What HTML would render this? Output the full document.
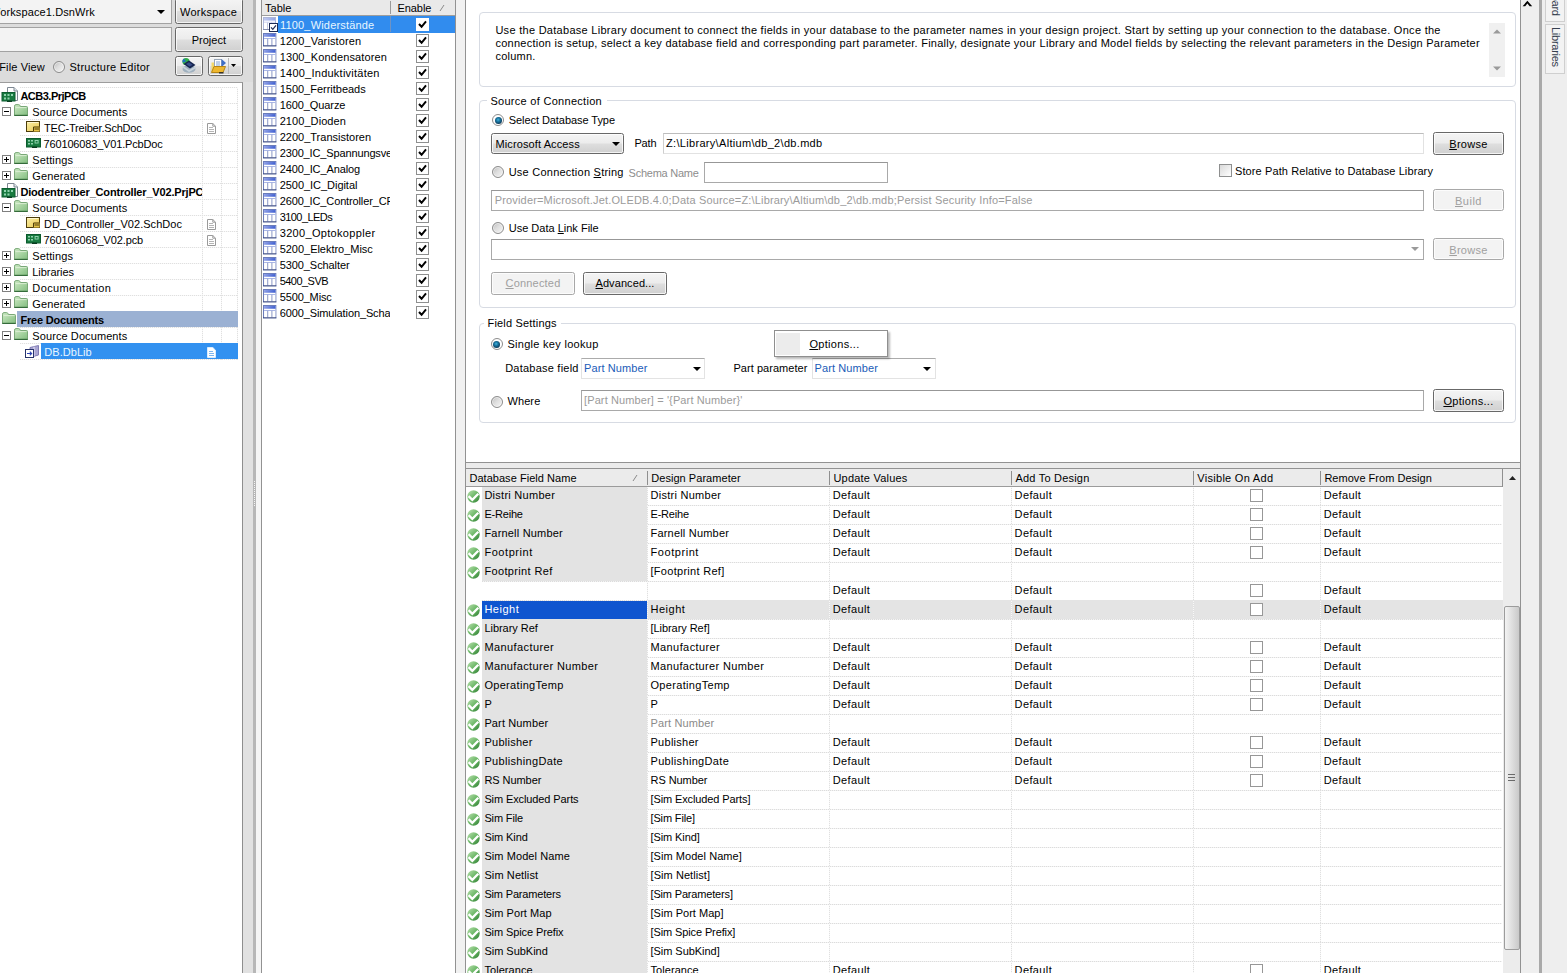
<!DOCTYPE html>
<html><head><meta charset="utf-8"><title>DB.DbLib</title>
<style>
html,body{margin:0;padding:0}html{overflow:hidden;width:1567px;height:973px}
body{width:1567px;height:973px;overflow:hidden;position:relative;background:#fff;font-family:"Liberation Sans",sans-serif;font-size:11px;color:#000;line-height:13px}
div{position:absolute;box-sizing:border-box}
svg.i{position:absolute;overflow:visible}
.t{position:absolute;white-space:pre;line-height:13px;height:13px}
.btn{border:1px solid #686868;border-radius:2.5px;background:linear-gradient(#f4f4f4 0%,#ececec 48%,#dedede 52%,#d0d0d0 100%);box-shadow:inset 0 0 0 1px rgba(255,255,255,.75)}
.btn.dis{border-color:#a8a8a8;background:#f3f3f3}
.inp{border:1px solid #a9a9a9;border-top-color:#979797;background:#fff}
.grp{border:1px solid #d7dbe3;border-radius:4px}
.cb{border:1px solid #8e8f8f;background:#fff}
.rad{border-radius:50%;border:1px solid #8c8c8c;background:linear-gradient(135deg,#bdbdbd 0%,#dedede 45%,#f6f6f6 100%);box-shadow:inset 0 0 0 1px rgba(255,255,255,.55)}
.rad.on{background:#fff}.rad.on::after{content:"";position:absolute;left:1.5px;top:1.5px;width:7px;height:7px;border-radius:50%;background:radial-gradient(circle at 45% 40%,#46b4dc 0%,#1b7aa6 30%,#0d3e5e 70%,#0a2840 100%)}
u{text-decoration:underline;text-underline-offset:1px}

</style></head>
<body>
<svg width="0" height="0" style="position:absolute">
<defs>
<linearGradient id="gF" x1="0" y1="0" x2="1" y2="1"><stop offset="0" stop-color="#cdeac4"/><stop offset="1" stop-color="#82bd7f"/></linearGradient>
<linearGradient id="gOk" x1="0" y1="0" x2="1" y2="1"><stop offset="0" stop-color="#b9e0ae"/><stop offset=".5" stop-color="#6db868"/><stop offset="1" stop-color="#2f7f33"/></linearGradient>
<linearGradient id="gT" x1="0" y1="0" x2="1" y2="0"><stop offset="0" stop-color="#8d9ee6"/><stop offset="1" stop-color="#3f5fd0"/></linearGradient>
<linearGradient id="gY" x1="0" y1="0" x2="1" y2="1"><stop offset="0" stop-color="#fbf0a8"/><stop offset="1" stop-color="#e9c64e"/></linearGradient>
<linearGradient id="gTh" x1="0" y1="0" x2="1" y2="0"><stop offset="0" stop-color="#f0f0f0"/><stop offset=".5" stop-color="#dcdcdc"/><stop offset="1" stop-color="#c4c4c4"/></linearGradient>
<symbol id="folder" viewBox="0 0 14 12"><path d="M.5 11.5V2.2Q.5 .6 2 .6H4.6Q5.6 .6 6 1.6L6.4 2.5H12.6Q13.5 2.5 13.5 3.4V11.5Z" fill="url(#gF)" stroke="#79a877" stroke-width="1"/><path d="M.3 11.4H13.7" stroke="#346b3a" stroke-width="1.2"/><path d="M1.5 3.6H12.5" stroke="#e4f3dd" stroke-width="1" opacity=".8"/></symbol>
<symbol id="prj" viewBox="0 0 17 15"><path d="M6.5 .5H13L16.5 4V13.5H6.5Z" fill="#fff" stroke="#7d8791" stroke-width="1"/><path d="M13 .5V4H16.5" fill="#dfe5ea" stroke="#7d8791" stroke-width="1"/><rect x="1" y="5.5" width="13" height="8.5" fill="#187a40"/><rect x="1" y="5.5" width="13" height="8.5" fill="none" stroke="#0d5c30" stroke-width="1"/><path d="M3 7h2v2H3zM6.5 7h2v2h-2zM10 7h2v2h-2zM3 10.5h2v2H3zM6.5 10.5h2v2h-2z" fill="#8fd3ae"/><rect x="6" y="13.6" width="5" height="1.4" fill="#0a3f22"/></symbol>
<symbol id="sch" viewBox="0 0 14 11"><rect x=".5" y=".5" width="13" height="10" fill="url(#gY)" stroke="#4d3d0c" stroke-width="1"/><path d="M7.5 5.5H13.5V10.5H7.5Z" fill="#e6c44a"/><path d="M7.5 6H13.5M8.5 8H13" stroke="#4d3d0c" stroke-width="1"/><path d="M7.5 6V10" stroke="#4d3d0c" stroke-width="1"/><path d="M1.5 1.5H12.5" stroke="#fff8cf" stroke-width="1"/></symbol>
<symbol id="pcb" viewBox="0 0 15 10"><rect x=".5" y=".5" width="14" height="8.5" fill="#187a40" stroke="#0b5a2d" stroke-width="1"/><path d="M2 2h2v1.6H2zM5 2h2v1.6H5zM2 5h2v1.6H2zM5 5h2v1.6H5zM8.6 2h4v3.6h-4z" fill="#8fd3ae"/><path d="M9.6 3h2v1.6h-2z" fill="#187a40"/><rect x="6" y="8.6" width="5" height="1.4" fill="#093b1f"/></symbol>
<symbol id="doc" viewBox="0 0 9 11"><path d="M.5 .5H5.8L8.5 3.2V10.5H.5Z" fill="#fff" stroke="#9a9a9a" stroke-width="1"/><path d="M5.8 .5V3.2H8.5" fill="none" stroke="#9a9a9a" stroke-width="1"/><path d="M2 4.5H6M2 6.5H7M2 8.5H7" stroke="#b5b5b5" stroke-width="1"/></symbol>
<symbol id="docw" viewBox="0 0 9 11"><path d="M.5 .5H5.8L8.5 3.2V10.5H.5Z" fill="#fff" stroke="#d9ecff" stroke-width="1"/><path d="M2 4.5H6M2 6.5H7M2 8.5H7" stroke="#7fb6ee" stroke-width="1"/></symbol>
<symbol id="dblib" viewBox="0 0 15 13"><path d="M5 2.5L13.5 .5V10L5 12.5Z" fill="#a9a5d2" stroke="#817cb4" stroke-width="1"/><path d="M9 1.6V11.3" stroke="#e6e3f6" stroke-width="1"/><rect x=".5" y="4.5" width="8" height="8" fill="#fff" stroke="#27336b" stroke-width="1"/><path d="M2 8.5H6.5M4.8 6.6L6.7 8.5L4.8 10.4" fill="none" stroke="#2a3fb0" stroke-width="1.1"/></symbol>
<symbol id="tbl" viewBox="0 0 13 13" preserveAspectRatio="none"><rect x=".5" y=".5" width="12" height="12" fill="#fff" stroke="#6b7cba" stroke-width="1"/><rect x="1" y="1" width="11" height="2.6" fill="url(#gT)"/><path d="M1 5.2H12" stroke="#aab6e6" stroke-width="1"/><path d="M4.5 5.5V12M8.5 5.5V12" stroke="#8f9cc9" stroke-width="1"/><path d="M0 12.5H13" stroke="#26356b" stroke-width="1"/></symbol>
<symbol id="ok" viewBox="0 0 13 13"><circle cx="6.5" cy="6.5" r="6.2" fill="url(#gOk)"/><path d="M1.6 6.1L5.3 9.8L11.3 3.7" fill="none" stroke="#fff" stroke-width="2.3" stroke-linejoin="miter"/></symbol>
<symbol id="plus" viewBox="0 0 9 9"><rect x=".5" y=".5" width="8" height="8" fill="#fff" stroke="#7f7f7f" stroke-width="1"/><path d="M2 4.5H7M4.5 2V7" stroke="#000" stroke-width="1"/></symbol>
<symbol id="minus" viewBox="0 0 9 9"><rect x=".5" y=".5" width="8" height="8" fill="#fff" stroke="#7f7f7f" stroke-width="1"/><path d="M2 4.5H7" stroke="#000" stroke-width="1"/></symbol>
<symbol id="chk" viewBox="0 0 13 13"><rect x=".5" y=".5" width="12" height="12" fill="#fff" stroke="#8e8f8f" stroke-width="1"/><path d="M3 6L5.6 8.8L10 3.4" fill="none" stroke="#000" stroke-width="2"/></symbol>
<symbol id="chks" viewBox="0 0 13 13"><rect x="0" y="0" width="13" height="13" fill="#fff"/><path d="M3 6L5.6 8.8L10 3.4" fill="none" stroke="#000" stroke-width="2"/></symbol>

</defs>
</svg>
<div style="left:0px;top:0px;width:253px;height:973px;background:#e1e1e1"></div>
<div style="left:0px;top:0px;width:253px;height:82px;background:#dcdcdc"></div>
<div style="left:253px;top:0px;width:3px;height:973px;background:#b7b7b7"></div>
<div style="left:256px;top:0px;width:5px;height:973px;background:#f5f5f5"></div>
<div style="left:254px;top:481px;width:1px;height:26px;background:repeating-linear-gradient(180deg,#f4f4f4 0 1px,transparent 1px 2px)"></div>
<div style="left:261px;top:0px;width:1px;height:973px;background:#929292"></div>
<div style="left:455px;top:0px;width:1px;height:973px;background:#929292"></div>
<div style="left:456px;top:0px;width:9px;height:973px;background:#f1f1f1"></div>
<div style="left:465px;top:0px;width:1px;height:973px;background:#929292"></div>
<div style="left:1520px;top:0px;width:1px;height:973px;background:#929292"></div>
<div style="left:1521px;top:0px;width:18px;height:973px;background:#efefef"></div>
<div style="left:1539px;top:0px;width:3px;height:973px;background:#a9a9a9"></div>
<div style="left:1542px;top:0px;width:25px;height:973px;background:#eeeeee"></div>
<div style="left:466px;top:462px;width:1054px;height:1px;background:#929292"></div>
<div style="left:466px;top:463px;width:1054px;height:5px;background:#ebebeb"></div>
<div style="left:466px;top:468px;width:1054px;height:1px;background:#929292"></div>
<div style="left:-2px;top:-2px;width:174px;height:26px;background:#f3f3f3;border:1px solid #a2a2a2"></div>
<span class="t" style="top:5.60px;letter-spacing:0.120px;left:-10.15px;">Workspace1.DsnWrk</span>
<svg class="i" style="left:157px;top:10px" width="8" height="4"><path d="M0 0H8L4 4Z" fill="#000"/></svg>
<div style="left:-2px;top:27px;width:174px;height:25px;background:#f3f3f3;border:1px solid #a2a2a2"></div>
<div class="btn" style="left:175px;top:-2px;width:68px;height:26px;"></div>
<span class="t" style="top:6.20px;letter-spacing:0.241px;left:180.00px;">Workspace</span>
<div class="btn" style="left:175px;top:27px;width:68px;height:25px;"></div>
<span class="t" style="top:33.60px;letter-spacing:0.007px;left:191.70px;">Project</span>
<div class="btn" style="left:175px;top:56px;width:28px;height:20px;"></div>
<div class="btn" style="left:208px;top:56px;width:35px;height:20px;"></div>
<div style="left:228px;top:58px;width:1px;height:16px;background:#b9b9b9"></div>
<svg class="i" style="left:231px;top:64px" width="5" height="3"><path d="M0 0H5L2.5 3Z" fill="#000"/></svg>
<svg class="i" style="left:181px;top:57px" width="16" height="17" viewBox="0 0 16 17"><ellipse cx="8" cy="12" rx="6.5" ry="3.8" fill="#9fb0be"/><path d="M1.5 8.5L8 13L14.5 9.5V11.5L8 15L1.5 10.5Z" fill="#c8d3dc"/><circle cx="5" cy="4.5" r="3.6" fill="#2fae4a"/><path d="M1.6 5.5A3.6 3.6 0 0 1 3 1.5L5 4.5Z" fill="#1f6fc0"/><path d="M2.5 7L8 3.5L14.5 8L9 11.5Z" fill="#15244f"/><path d="M5 7L8 5.2L11.5 7.8L8.6 9.6Z" fill="#3a4f8a"/></svg>
<svg class="i" style="left:211px;top:58px" width="16" height="16" viewBox="0 0 16 16"><path d="M.5 4.5H3V14H.5Z" fill="#f3d86a"/><rect x="3.5" y="1.5" width="7" height="9" fill="#fff" stroke="#9aa7b8" stroke-width="1"/><path d="M5 4H9M5 6H9M5 8H9" stroke="#7fa2d6" stroke-width="1"/><path d="M10.5 1L15 5L10.5 9Z" fill="#3f6fc6"/><path d="M.5 14.5L3 8.5H14.5L12 14.5Z" fill="#eeb72e" stroke="#b58515" stroke-width="1"/><path d="M8 14.8H12.5" stroke="#2b2b2b" stroke-width="1.4"/></svg>
<span class="t" style="top:60.60px;letter-spacing:0.120px;left:-0.72px;">File View</span>
<div class="rad" style="left:53px;top:61px;width:12px;height:12px;"></div>
<span class="t" style="top:60.60px;letter-spacing:0.255px;left:69.50px;">Structure Editor</span>
<div style="left:-1px;top:82px;width:244px;height:892px;background:#fff;border:1px solid #8e8e8e;border-top-color:#9c9c9c"></div>
<div style="left:20px;top:87px;width:218px;height:1px;background:repeating-linear-gradient(90deg,#e0e0e0 0 1px,#f8f8f8 1px 2px)"></div>
<div style="left:20px;top:103px;width:218px;height:1px;background:repeating-linear-gradient(90deg,#e0e0e0 0 1px,#f8f8f8 1px 2px)"></div>
<div style="left:20px;top:119px;width:218px;height:1px;background:repeating-linear-gradient(90deg,#e0e0e0 0 1px,#f8f8f8 1px 2px)"></div>
<div style="left:20px;top:135px;width:218px;height:1px;background:repeating-linear-gradient(90deg,#e0e0e0 0 1px,#f8f8f8 1px 2px)"></div>
<div style="left:20px;top:151px;width:218px;height:1px;background:repeating-linear-gradient(90deg,#e0e0e0 0 1px,#f8f8f8 1px 2px)"></div>
<div style="left:20px;top:167px;width:218px;height:1px;background:repeating-linear-gradient(90deg,#e0e0e0 0 1px,#f8f8f8 1px 2px)"></div>
<div style="left:20px;top:183px;width:218px;height:1px;background:repeating-linear-gradient(90deg,#e0e0e0 0 1px,#f8f8f8 1px 2px)"></div>
<div style="left:20px;top:199px;width:218px;height:1px;background:repeating-linear-gradient(90deg,#e0e0e0 0 1px,#f8f8f8 1px 2px)"></div>
<div style="left:20px;top:215px;width:218px;height:1px;background:repeating-linear-gradient(90deg,#e0e0e0 0 1px,#f8f8f8 1px 2px)"></div>
<div style="left:20px;top:231px;width:218px;height:1px;background:repeating-linear-gradient(90deg,#e0e0e0 0 1px,#f8f8f8 1px 2px)"></div>
<div style="left:20px;top:247px;width:218px;height:1px;background:repeating-linear-gradient(90deg,#e0e0e0 0 1px,#f8f8f8 1px 2px)"></div>
<div style="left:20px;top:263px;width:218px;height:1px;background:repeating-linear-gradient(90deg,#e0e0e0 0 1px,#f8f8f8 1px 2px)"></div>
<div style="left:20px;top:279px;width:218px;height:1px;background:repeating-linear-gradient(90deg,#e0e0e0 0 1px,#f8f8f8 1px 2px)"></div>
<div style="left:20px;top:295px;width:218px;height:1px;background:repeating-linear-gradient(90deg,#e0e0e0 0 1px,#f8f8f8 1px 2px)"></div>
<div style="left:20px;top:311px;width:218px;height:1px;background:repeating-linear-gradient(90deg,#e0e0e0 0 1px,#f8f8f8 1px 2px)"></div>
<div style="left:20px;top:327px;width:218px;height:1px;background:repeating-linear-gradient(90deg,#e0e0e0 0 1px,#f8f8f8 1px 2px)"></div>
<div style="left:20px;top:343px;width:218px;height:1px;background:repeating-linear-gradient(90deg,#e0e0e0 0 1px,#f8f8f8 1px 2px)"></div>
<div style="left:20px;top:359px;width:218px;height:1px;background:repeating-linear-gradient(90deg,#e0e0e0 0 1px,#f8f8f8 1px 2px)"></div>
<div style="left:202px;top:88px;width:1px;height:272px;background:repeating-linear-gradient(0deg,#e0e0e0 0 1px,#f8f8f8 1px 2px)"></div>
<div style="left:221px;top:88px;width:1px;height:272px;background:repeating-linear-gradient(0deg,#e0e0e0 0 1px,#f8f8f8 1px 2px)"></div>
<div style="left:237px;top:88px;width:1px;height:272px;background:repeating-linear-gradient(0deg,#e0e0e0 0 1px,#f8f8f8 1px 2px)"></div>
<svg class="i" style="left:1px;top:87px" width="17" height="15" ><use href="#prj"/></svg>
<span class="t" style="top:89.80px;letter-spacing:-0.501px;left:20.40px;font-weight:bold;">ACB3.PrjPCB</span>
<svg class="i" style="left:2px;top:107px" width="9" height="9" ><use href="#minus"/></svg>
<svg class="i" style="left:14px;top:104.4px" width="14" height="12" ><use href="#folder"/></svg>
<span class="t" style="top:105.80px;letter-spacing:0.091px;left:32.30px;">Source Documents</span>
<svg class="i" style="left:26px;top:121.2px" width="14" height="11" ><use href="#sch"/></svg>
<span class="t" style="top:121.80px;letter-spacing:-0.192px;left:44.00px;">TEC-Treiber.SchDoc</span>
<svg class="i" style="left:207px;top:122.5px" width="9" height="11" ><use href="#doc"/></svg>
<svg class="i" style="left:25.5px;top:137.5px" width="15" height="10" ><use href="#pcb"/></svg>
<span class="t" style="top:137.80px;letter-spacing:-0.166px;left:43.60px;">760106083_V01.PcbDoc</span>
<svg class="i" style="left:2px;top:155px" width="9" height="9" ><use href="#plus"/></svg>
<svg class="i" style="left:14px;top:152.4px" width="14" height="12" ><use href="#folder"/></svg>
<span class="t" style="top:153.80px;letter-spacing:0.119px;left:32.30px;">Settings</span>
<svg class="i" style="left:2px;top:171px" width="9" height="9" ><use href="#plus"/></svg>
<svg class="i" style="left:14px;top:168.4px" width="14" height="12" ><use href="#folder"/></svg>
<span class="t" style="top:169.80px;letter-spacing:0.113px;left:32.30px;">Generated</span>
<svg class="i" style="left:1px;top:183px" width="17" height="15" ><use href="#prj"/></svg>
<span class="t" style="top:185.80px;letter-spacing:-0.173px;left:20.40px;font-weight:bold;width:181.4px;overflow:hidden;">Diodentreiber_Controller_V02.PrjPCB</span>
<svg class="i" style="left:2px;top:203px" width="9" height="9" ><use href="#minus"/></svg>
<svg class="i" style="left:14px;top:200.4px" width="14" height="12" ><use href="#folder"/></svg>
<span class="t" style="top:201.80px;letter-spacing:0.091px;left:32.30px;">Source Documents</span>
<svg class="i" style="left:26px;top:217.2px" width="14" height="11" ><use href="#sch"/></svg>
<span class="t" style="top:217.80px;letter-spacing:0.044px;left:44.00px;">DD_Controller_V02.SchDoc</span>
<svg class="i" style="left:207px;top:218.5px" width="9" height="11" ><use href="#doc"/></svg>
<svg class="i" style="left:25.5px;top:233.5px" width="15" height="10" ><use href="#pcb"/></svg>
<span class="t" style="top:233.80px;letter-spacing:-0.126px;left:43.60px;">760106068_V02.pcb</span>
<svg class="i" style="left:207px;top:234.5px" width="9" height="11" ><use href="#doc"/></svg>
<svg class="i" style="left:2px;top:251px" width="9" height="9" ><use href="#plus"/></svg>
<svg class="i" style="left:14px;top:248.4px" width="14" height="12" ><use href="#folder"/></svg>
<span class="t" style="top:249.80px;letter-spacing:0.119px;left:32.30px;">Settings</span>
<svg class="i" style="left:2px;top:267px" width="9" height="9" ><use href="#plus"/></svg>
<svg class="i" style="left:14px;top:264.4px" width="14" height="12" ><use href="#folder"/></svg>
<span class="t" style="top:265.80px;letter-spacing:-0.054px;left:32.30px;">Libraries</span>
<svg class="i" style="left:2px;top:283px" width="9" height="9" ><use href="#plus"/></svg>
<svg class="i" style="left:14px;top:280.4px" width="14" height="12" ><use href="#folder"/></svg>
<span class="t" style="top:281.80px;letter-spacing:0.385px;left:32.30px;">Documentation</span>
<svg class="i" style="left:2px;top:299px" width="9" height="9" ><use href="#plus"/></svg>
<svg class="i" style="left:14px;top:296.4px" width="14" height="12" ><use href="#folder"/></svg>
<span class="t" style="top:297.80px;letter-spacing:0.113px;left:32.30px;">Generated</span>
<div style="left:17px;top:311.2px;width:221px;height:16px;background:#9bb1d3"></div>
<svg class="i" style="left:2px;top:312.4px" width="14" height="12" ><use href="#folder"/></svg>
<span class="t" style="top:313.80px;letter-spacing:-0.186px;left:20.40px;font-weight:bold;">Free Documents</span>
<svg class="i" style="left:2px;top:331px" width="9" height="9" ><use href="#minus"/></svg>
<svg class="i" style="left:14px;top:328.4px" width="14" height="12" ><use href="#folder"/></svg>
<span class="t" style="top:329.80px;letter-spacing:0.091px;left:32.30px;">Source Documents</span>
<div style="left:41px;top:343.1px;width:197px;height:16px;background:#3291f0"></div>
<svg class="i" style="left:25px;top:345px" width="15" height="13" ><use href="#dblib"/></svg>
<span class="t" style="top:345.80px;letter-spacing:0.040px;left:44.30px;color:#e9f6ff;">DB.DbLib</span>
<svg class="i" style="left:207px;top:346.5px" width="9" height="11" ><use href="#docw"/></svg>
<div style="left:262px;top:0px;width:193px;height:16px;background:#e9e9e9;border-bottom:1px solid #9d9d9d"></div>
<div style="left:390px;top:1px;width:1px;height:13px;background:#9a9a9a"></div>
<span class="t" style="top:1.60px;letter-spacing:0.041px;left:265.00px;">Table</span>
<span class="t" style="top:1.60px;letter-spacing:-0.044px;left:397.40px;">Enable</span>
<svg class="i" style="left:439px;top:4px" width="6" height="8"><path d="M1 7L5 1" stroke="#8a8a8a" stroke-width="1"/></svg>
<div style="left:278px;top:16px;width:177px;height:16.5px;background:#318cee"></div>
<div style="left:390px;top:16px;width:1px;height:16px;background:#6f93c4"></div>
<svg class="i" style="left:263px;top:17px" width="13" height="13" opacity=".55"><use href="#tbl"/></svg>
<svg class="i" style="left:269px;top:23px" width="9" height="9" viewBox="0 0 9 9"><rect x=".5" y=".5" width="8" height="8" fill="#fff" stroke="#1c2b55"/><path d="M2 4.4L3.8 6.3L7 2.3" fill="none" stroke="#1c2b55" stroke-width="1.2"/></svg>
<span class="t" style="top:18.50px;letter-spacing:0.179px;left:280.00px;color:#e6f6ff;width:110px;overflow:hidden;">1100_Widerstände</span>
<svg class="i" style="left:416px;top:18px" width="13" height="13" ><use href="#chks"/></svg>
<svg class="i" style="left:263.2px;top:33px" width="13.6" height="13.6" preserveAspectRatio="none"><use href="#tbl"/></svg>
<span class="t" style="top:34.50px;letter-spacing:0.100px;left:279.70px;width:110.3px;overflow:hidden;">1200_Varistoren</span>
<svg class="i" style="left:416px;top:34px" width="13" height="13" ><use href="#chk"/></svg>
<svg class="i" style="left:263.2px;top:49px" width="13.6" height="13.6" preserveAspectRatio="none"><use href="#tbl"/></svg>
<span class="t" style="top:50.50px;letter-spacing:0.110px;left:279.70px;width:110.3px;overflow:hidden;">1300_Kondensatoren</span>
<svg class="i" style="left:416px;top:50px" width="13" height="13" ><use href="#chk"/></svg>
<svg class="i" style="left:263.2px;top:65px" width="13.6" height="13.6" preserveAspectRatio="none"><use href="#tbl"/></svg>
<span class="t" style="top:66.50px;letter-spacing:0.241px;left:279.70px;width:110.3px;overflow:hidden;">1400_Induktivitäten</span>
<svg class="i" style="left:416px;top:66px" width="13" height="13" ><use href="#chk"/></svg>
<svg class="i" style="left:263.2px;top:81px" width="13.6" height="13.6" preserveAspectRatio="none"><use href="#tbl"/></svg>
<span class="t" style="top:82.50px;letter-spacing:-0.015px;left:279.70px;width:110.3px;overflow:hidden;">1500_Ferritbeads</span>
<svg class="i" style="left:416px;top:82px" width="13" height="13" ><use href="#chk"/></svg>
<svg class="i" style="left:263.2px;top:97px" width="13.6" height="13.6" preserveAspectRatio="none"><use href="#tbl"/></svg>
<span class="t" style="top:98.50px;letter-spacing:-0.088px;left:279.70px;width:110.3px;overflow:hidden;">1600_Quarze</span>
<svg class="i" style="left:416px;top:98px" width="13" height="13" ><use href="#chk"/></svg>
<svg class="i" style="left:263.2px;top:113px" width="13.6" height="13.6" preserveAspectRatio="none"><use href="#tbl"/></svg>
<span class="t" style="top:114.50px;letter-spacing:0.068px;left:279.70px;width:110.3px;overflow:hidden;">2100_Dioden</span>
<svg class="i" style="left:416px;top:114px" width="13" height="13" ><use href="#chk"/></svg>
<svg class="i" style="left:263.2px;top:129px" width="13.6" height="13.6" preserveAspectRatio="none"><use href="#tbl"/></svg>
<span class="t" style="top:130.50px;letter-spacing:0.004px;left:279.70px;width:110.3px;overflow:hidden;">2200_Transistoren</span>
<svg class="i" style="left:416px;top:130px" width="13" height="13" ><use href="#chk"/></svg>
<svg class="i" style="left:263.2px;top:145px" width="13.6" height="13.6" preserveAspectRatio="none"><use href="#tbl"/></svg>
<span class="t" style="top:146.50px;letter-spacing:-0.137px;left:279.70px;width:110.3px;overflow:hidden;">2300_IC_Spannungsversorgung</span>
<svg class="i" style="left:416px;top:146px" width="13" height="13" ><use href="#chk"/></svg>
<svg class="i" style="left:263.2px;top:161px" width="13.6" height="13.6" preserveAspectRatio="none"><use href="#tbl"/></svg>
<span class="t" style="top:162.50px;letter-spacing:-0.119px;left:279.70px;width:110.3px;overflow:hidden;">2400_IC_Analog</span>
<svg class="i" style="left:416px;top:162px" width="13" height="13" ><use href="#chk"/></svg>
<svg class="i" style="left:263.2px;top:177px" width="13.6" height="13.6" preserveAspectRatio="none"><use href="#tbl"/></svg>
<span class="t" style="top:178.50px;letter-spacing:-0.039px;left:279.70px;width:110.3px;overflow:hidden;">2500_IC_Digital</span>
<svg class="i" style="left:416px;top:178px" width="13" height="13" ><use href="#chk"/></svg>
<svg class="i" style="left:263.2px;top:193px" width="13.6" height="13.6" preserveAspectRatio="none"><use href="#tbl"/></svg>
<span class="t" style="top:194.50px;letter-spacing:-0.133px;left:279.70px;width:110.3px;overflow:hidden;">2600_IC_Controller_CPLD</span>
<svg class="i" style="left:416px;top:194px" width="13" height="13" ><use href="#chk"/></svg>
<svg class="i" style="left:263.2px;top:209px" width="13.6" height="13.6" preserveAspectRatio="none"><use href="#tbl"/></svg>
<span class="t" style="top:210.50px;letter-spacing:-0.567px;left:279.70px;width:110.3px;overflow:hidden;">3100_LEDs</span>
<svg class="i" style="left:416px;top:210px" width="13" height="13" ><use href="#chk"/></svg>
<svg class="i" style="left:263.2px;top:225px" width="13.6" height="13.6" preserveAspectRatio="none"><use href="#tbl"/></svg>
<span class="t" style="top:226.50px;letter-spacing:0.324px;left:279.70px;width:110.3px;overflow:hidden;">3200_Optokoppler</span>
<svg class="i" style="left:416px;top:226px" width="13" height="13" ><use href="#chk"/></svg>
<svg class="i" style="left:263.2px;top:241px" width="13.6" height="13.6" preserveAspectRatio="none"><use href="#tbl"/></svg>
<span class="t" style="top:242.50px;letter-spacing:-0.027px;left:279.70px;width:110.3px;overflow:hidden;">5200_Elektro_Misc</span>
<svg class="i" style="left:416px;top:242px" width="13" height="13" ><use href="#chk"/></svg>
<svg class="i" style="left:263.2px;top:257px" width="13.6" height="13.6" preserveAspectRatio="none"><use href="#tbl"/></svg>
<span class="t" style="top:258.50px;letter-spacing:-0.081px;left:279.70px;width:110.3px;overflow:hidden;">5300_Schalter</span>
<svg class="i" style="left:416px;top:258px" width="13" height="13" ><use href="#chk"/></svg>
<svg class="i" style="left:263.2px;top:273px" width="13.6" height="13.6" preserveAspectRatio="none"><use href="#tbl"/></svg>
<span class="t" style="top:274.50px;letter-spacing:-0.539px;left:279.70px;width:110.3px;overflow:hidden;">5400_SVB</span>
<svg class="i" style="left:416px;top:274px" width="13" height="13" ><use href="#chk"/></svg>
<svg class="i" style="left:263.2px;top:289px" width="13.6" height="13.6" preserveAspectRatio="none"><use href="#tbl"/></svg>
<span class="t" style="top:290.50px;letter-spacing:-0.134px;left:279.70px;width:110.3px;overflow:hidden;">5500_Misc</span>
<svg class="i" style="left:416px;top:290px" width="13" height="13" ><use href="#chk"/></svg>
<svg class="i" style="left:263.2px;top:305px" width="13.6" height="13.6" preserveAspectRatio="none"><use href="#tbl"/></svg>
<span class="t" style="top:306.50px;letter-spacing:-0.117px;left:279.70px;width:110.3px;overflow:hidden;">6000_Simulation_Schaltung</span>
<svg class="i" style="left:416px;top:306px" width="13" height="13" ><use href="#chk"/></svg>
<div class="grp" style="left:479px;top:12px;width:1037px;height:75px;"></div>
<span class="t" style="top:24.20px;letter-spacing:0.284px;left:495.40px;">Use the Database Library document to connect the fields in your database to the parameter names in your design project. Start by setting up your connection to the database. Once the</span>
<span class="t" style="top:37.20px;letter-spacing:0.253px;left:495.40px;">connection is setup, select a key database field and corresponding part parameter. Finally, designate your Library and Model fields by selecting the relevant parameters in the Design Parameter</span>
<span class="t" style="top:50.20px;letter-spacing:0.253px;left:495.40px;">column.</span>
<div style="left:1489px;top:23px;width:16px;height:54px;background:#f0f0f0"></div>
<svg class="i" style="left:1493px;top:29px" width="8" height="5"><path d="M0 4.5L4 .5L8 4.5Z" fill="#9a9a9a"/></svg>
<svg class="i" style="left:1493px;top:66px" width="8" height="5"><path d="M0 .5L4 4.5L8 .5Z" fill="#9a9a9a"/></svg>
<div class="grp" style="left:479px;top:100px;width:1037px;height:208px;"></div>
<div style="left:487px;top:95px;width:120px;height:12px;background:#fff"></div>
<span class="t" style="top:94.80px;letter-spacing:0.290px;left:490.40px;">Source of Connection</span>
<div class="rad on" style="left:492px;top:114px;width:12px;height:12px;"></div>
<span class="t" style="top:113.60px;letter-spacing:-0.056px;left:508.70px;">Select Database Type</span>
<div class="btn" style="left:491px;top:133.3px;width:133px;height:20.7px;"></div>
<span class="t" style="top:137.90px;letter-spacing:0.111px;left:495.50px;">Microsoft Access</span>
<svg class="i" style="left:612px;top:142px" width="8" height="4"><path d="M0 0H8L4 4Z" fill="#000"/></svg>
<span class="t" style="top:137.20px;letter-spacing:-0.135px;left:634.40px;">Path</span>
<div style="left:663px;top:133px;width:761px;height:21px;border:1px solid #e2e2e2;border-top-color:#bdbdbd;border-left-color:#cfcfcf;background:#fff"></div>
<span class="t" style="top:137.20px;letter-spacing:0.315px;left:666.00px;">Z:\Library\Altium\db_2\db.mdb</span>
<div class="btn" style="left:1433px;top:132px;width:71px;height:22.6px;"></div>
<span class="t" style="top:137.80px;letter-spacing:0.302px;left:1449.25px;"><u>B</u>rowse</span>
<div class="rad" style="left:492px;top:166px;width:12px;height:12px;"></div>
<span class="t" style="top:165.90px;letter-spacing:0.235px;left:508.70px;">Use Connection <u>S</u>tring</span>
<span class="t" style="top:166.90px;letter-spacing:-0.251px;left:628.60px;color:#8d8d8d;">Schema Name</span>
<div class="inp" style="left:704px;top:162.4px;width:184px;height:20.6px;"></div>
<div class="cb" style="left:1219px;top:164px;width:13px;height:13px;background:linear-gradient(135deg,#d9d9d9,#fff)"></div>
<span class="t" style="top:164.90px;letter-spacing:0.107px;left:1235.00px;">Store Path Relative to Database Library</span>
<div class="inp" style="left:491px;top:190px;width:933px;height:21px;"></div>
<span class="t" style="top:194.20px;letter-spacing:0.170px;left:494.70px;color:#9b9b9b;">Provider=Microsoft.Jet.OLEDB.4.0;Data Source=Z:\Library\Altium\db_2\db.mdb;Persist Security Info=False</span>
<div class="btn dis" style="left:1433px;top:189.2px;width:71px;height:22.3px;"></div>
<span class="t" style="top:194.60px;letter-spacing:0.506px;left:1455.00px;color:#a0a0a0;"><u>B</u>uild</span>
<div class="rad" style="left:492px;top:222.3px;width:12px;height:12px;"></div>
<span class="t" style="top:222.10px;letter-spacing:0.007px;left:508.70px;">Use Data <u>L</u>ink File</span>
<div class="inp" style="left:491px;top:239px;width:933px;height:21px;"></div>
<svg class="i" style="left:1411px;top:247px" width="8" height="4"><path d="M0 0H8L4 4Z" fill="#9a9a9a"/></svg>
<div class="btn dis" style="left:1433px;top:238.2px;width:71px;height:22.3px;"></div>
<span class="t" style="top:243.60px;letter-spacing:0.302px;left:1449.25px;color:#a0a0a0;"><u>B</u>rowse</span>
<div class="btn dis" style="left:491px;top:271.8px;width:84px;height:22.8px;"></div>
<span class="t" style="top:277.20px;letter-spacing:0.198px;left:505.50px;color:#a0a0a0;"><u>C</u>onnected</span>
<div class="btn" style="left:583px;top:271.8px;width:84px;height:22.8px;"></div>
<span class="t" style="top:277.20px;letter-spacing:0.082px;left:595.50px;"><u>A</u>dvanced...</span>
<div class="grp" style="left:479px;top:322.5px;width:1037px;height:100px;"></div>
<div style="left:484px;top:317px;width:77px;height:12px;background:#fff"></div>
<span class="t" style="top:317.20px;letter-spacing:0.182px;left:487.50px;">Field Settings</span>
<div class="rad on" style="left:490.7px;top:338.2px;width:12px;height:12px;"></div>
<span class="t" style="top:337.90px;letter-spacing:0.292px;left:507.40px;">Single key lookup</span>
<span class="t" style="top:362.20px;letter-spacing:0.227px;left:505.20px;">Database field</span>
<div style="left:581px;top:358px;width:124px;height:21px;border:1px solid #e3e3e3;border-top-color:#ababab;background:#fff"></div>
<span class="t" style="top:362.20px;letter-spacing:0.113px;left:584.00px;color:#1b5cb8;">Part Number</span>
<svg class="i" style="left:693px;top:366.5px" width="8" height="4"><path d="M0 0H8L4 4Z" fill="#000"/></svg>
<span class="t" style="top:362.20px;letter-spacing:0.052px;left:733.40px;">Part parameter</span>
<div style="left:811.5px;top:358px;width:124px;height:21px;border:1px solid #e3e3e3;border-top-color:#ababab;background:#fff"></div>
<span class="t" style="top:362.20px;letter-spacing:0.113px;left:814.50px;color:#1b5cb8;">Part Number</span>
<svg class="i" style="left:923px;top:366.5px" width="8" height="4"><path d="M0 0H8L4 4Z" fill="#000"/></svg>
<div class="rad" style="left:490.7px;top:395.5px;width:12px;height:12px;"></div>
<span class="t" style="top:395.40px;letter-spacing:0.119px;left:507.40px;">Where</span>
<div class="inp" style="left:581px;top:389.8px;width:843px;height:21px;"></div>
<span class="t" style="top:394.20px;letter-spacing:0.119px;left:584.00px;color:#9b9b9b;">[Part Number] = &#x27;{Part Number}&#x27;</span>
<div class="btn" style="left:1433px;top:389.2px;width:71px;height:22.8px;"></div>
<span class="t" style="top:394.80px;letter-spacing:0.312px;left:1443.40px;"><u>O</u>ptions...</span>
<div style="left:774px;top:329.8px;width:113.5px;height:27.7px;background:#fff;border:1px solid #8f8f8f;box-shadow:2px 2px 2px rgba(0,0,0,.28)"></div>
<div style="left:776px;top:333px;width:24px;height:22px;background:#ececec"></div>
<span class="t" style="top:337.90px;letter-spacing:0.312px;left:809.40px;"><u>O</u>ptions...</span>
<div style="left:466px;top:469px;width:1037px;height:17px;background:#ebebeb"></div>
<div style="left:466px;top:486px;width:1037px;height:1px;background:#9b9b9b"></div>
<div style="left:647px;top:471px;width:1px;height:14px;background:#8f8f8f"></div>
<div style="left:829px;top:471px;width:1px;height:14px;background:#8f8f8f"></div>
<div style="left:1011px;top:471px;width:1px;height:14px;background:#8f8f8f"></div>
<div style="left:1193px;top:471px;width:1px;height:14px;background:#8f8f8f"></div>
<div style="left:1320px;top:471px;width:1px;height:14px;background:#8f8f8f"></div>
<div style="left:1502px;top:469px;width:1px;height:18px;background:#8f8f8f"></div>
<span class="t" style="top:471.80px;letter-spacing:0.043px;left:469.40px;">Database Field Name</span>
<svg class="i" style="left:632px;top:474px" width="6" height="8"><path d="M1 7L5 1" stroke="#8a8a8a" stroke-width="1"/></svg>
<span class="t" style="top:471.80px;letter-spacing:0.040px;left:651.30px;">Design Parameter</span>
<span class="t" style="top:471.80px;letter-spacing:0.219px;left:833.40px;">Update Values</span>
<span class="t" style="top:471.80px;letter-spacing:0.203px;left:1015.50px;">Add To Design</span>
<span class="t" style="top:471.80px;letter-spacing:0.288px;left:1197.30px;">Visible On Add</span>
<span class="t" style="top:471.80px;letter-spacing:0.029px;left:1324.40px;">Remove From Design</span>
<div style="left:1503px;top:469px;width:17px;height:504px;background:#ececec"></div>
<svg class="i" style="left:1509px;top:476px" width="7" height="4"><path d="M0 4L3.5 0L7 4Z" fill="#222"/></svg>
<div style="left:1504px;top:606px;width:15.5px;height:344px;background:linear-gradient(90deg,#f3f3f3,#dedede 50%,#c9c9c9);border:1px solid #9c9c9c;border-radius:2px"></div>
<div style="left:1508px;top:774px;width:7px;height:1px;background:#6a6a6a"></div>
<div style="left:1508px;top:777px;width:7px;height:1px;background:#6a6a6a"></div>
<div style="left:1508px;top:780px;width:7px;height:1px;background:#6a6a6a"></div>
<div style="left:482px;top:487px;width:165px;height:19px;background:#e3e3e3"></div>
<svg class="i" style="left:467px;top:489.7px" width="13" height="13" ><use href="#ok"/></svg>
<span class="t" style="top:488.60px;letter-spacing:0.267px;left:484.40px;">Distri Number</span>
<span class="t" style="top:488.60px;letter-spacing:0.267px;left:650.50px;">Distri Number</span>
<div style="left:482px;top:505px;width:1020px;height:1px;background:repeating-linear-gradient(90deg,#dcdcdc 0 1px,#f3f3f3 1px 2px)"></div>
<div style="left:647px;top:487px;width:1px;height:18px;background:repeating-linear-gradient(0deg,#e0e0e0 0 1px,#f8f8f8 1px 2px)"></div>
<div style="left:829px;top:487px;width:1px;height:18px;background:repeating-linear-gradient(0deg,#e0e0e0 0 1px,#f8f8f8 1px 2px)"></div>
<div style="left:1011px;top:487px;width:1px;height:18px;background:repeating-linear-gradient(0deg,#e0e0e0 0 1px,#f8f8f8 1px 2px)"></div>
<div style="left:1193px;top:487px;width:1px;height:18px;background:repeating-linear-gradient(0deg,#e0e0e0 0 1px,#f8f8f8 1px 2px)"></div>
<div style="left:1320px;top:487px;width:1px;height:18px;background:repeating-linear-gradient(0deg,#e0e0e0 0 1px,#f8f8f8 1px 2px)"></div>
<span class="t" style="top:488.60px;letter-spacing:0.377px;left:832.80px;">Default</span>
<span class="t" style="top:488.60px;letter-spacing:0.377px;left:1014.60px;">Default</span>
<span class="t" style="top:488.60px;letter-spacing:0.377px;left:1323.70px;">Default</span>
<div style="left:1250px;top:489px;width:13px;height:13px;border:1px solid #979797;background:#fff"></div>
<div style="left:482px;top:505px;width:165px;height:20px;background:#e3e3e3"></div>
<svg class="i" style="left:467px;top:508.7px" width="13" height="13" ><use href="#ok"/></svg>
<span class="t" style="top:507.60px;letter-spacing:-0.193px;left:484.40px;">E-Reihe</span>
<span class="t" style="top:507.60px;letter-spacing:-0.193px;left:650.50px;">E-Reihe</span>
<div style="left:482px;top:524px;width:1020px;height:1px;background:repeating-linear-gradient(90deg,#dcdcdc 0 1px,#f3f3f3 1px 2px)"></div>
<div style="left:647px;top:506px;width:1px;height:18px;background:repeating-linear-gradient(0deg,#e0e0e0 0 1px,#f8f8f8 1px 2px)"></div>
<div style="left:829px;top:506px;width:1px;height:18px;background:repeating-linear-gradient(0deg,#e0e0e0 0 1px,#f8f8f8 1px 2px)"></div>
<div style="left:1011px;top:506px;width:1px;height:18px;background:repeating-linear-gradient(0deg,#e0e0e0 0 1px,#f8f8f8 1px 2px)"></div>
<div style="left:1193px;top:506px;width:1px;height:18px;background:repeating-linear-gradient(0deg,#e0e0e0 0 1px,#f8f8f8 1px 2px)"></div>
<div style="left:1320px;top:506px;width:1px;height:18px;background:repeating-linear-gradient(0deg,#e0e0e0 0 1px,#f8f8f8 1px 2px)"></div>
<span class="t" style="top:507.60px;letter-spacing:0.377px;left:832.80px;">Default</span>
<span class="t" style="top:507.60px;letter-spacing:0.377px;left:1014.60px;">Default</span>
<span class="t" style="top:507.60px;letter-spacing:0.377px;left:1323.70px;">Default</span>
<div style="left:1250px;top:508px;width:13px;height:13px;border:1px solid #979797;background:#fff"></div>
<div style="left:482px;top:524px;width:165px;height:20px;background:#e3e3e3"></div>
<svg class="i" style="left:467px;top:527.7px" width="13" height="13" ><use href="#ok"/></svg>
<span class="t" style="top:526.60px;letter-spacing:0.199px;left:484.40px;">Farnell Number</span>
<span class="t" style="top:526.60px;letter-spacing:0.199px;left:650.50px;">Farnell Number</span>
<div style="left:482px;top:543px;width:1020px;height:1px;background:repeating-linear-gradient(90deg,#dcdcdc 0 1px,#f3f3f3 1px 2px)"></div>
<div style="left:647px;top:525px;width:1px;height:18px;background:repeating-linear-gradient(0deg,#e0e0e0 0 1px,#f8f8f8 1px 2px)"></div>
<div style="left:829px;top:525px;width:1px;height:18px;background:repeating-linear-gradient(0deg,#e0e0e0 0 1px,#f8f8f8 1px 2px)"></div>
<div style="left:1011px;top:525px;width:1px;height:18px;background:repeating-linear-gradient(0deg,#e0e0e0 0 1px,#f8f8f8 1px 2px)"></div>
<div style="left:1193px;top:525px;width:1px;height:18px;background:repeating-linear-gradient(0deg,#e0e0e0 0 1px,#f8f8f8 1px 2px)"></div>
<div style="left:1320px;top:525px;width:1px;height:18px;background:repeating-linear-gradient(0deg,#e0e0e0 0 1px,#f8f8f8 1px 2px)"></div>
<span class="t" style="top:526.60px;letter-spacing:0.377px;left:832.80px;">Default</span>
<span class="t" style="top:526.60px;letter-spacing:0.377px;left:1014.60px;">Default</span>
<span class="t" style="top:526.60px;letter-spacing:0.377px;left:1323.70px;">Default</span>
<div style="left:1250px;top:527px;width:13px;height:13px;border:1px solid #979797;background:#fff"></div>
<div style="left:482px;top:543px;width:165px;height:20px;background:#e3e3e3"></div>
<svg class="i" style="left:467px;top:546.7px" width="13" height="13" ><use href="#ok"/></svg>
<span class="t" style="top:545.60px;letter-spacing:0.564px;left:484.40px;">Footprint</span>
<span class="t" style="top:545.60px;letter-spacing:0.564px;left:650.50px;">Footprint</span>
<div style="left:482px;top:562px;width:1020px;height:1px;background:repeating-linear-gradient(90deg,#dcdcdc 0 1px,#f3f3f3 1px 2px)"></div>
<div style="left:647px;top:544px;width:1px;height:18px;background:repeating-linear-gradient(0deg,#e0e0e0 0 1px,#f8f8f8 1px 2px)"></div>
<div style="left:829px;top:544px;width:1px;height:18px;background:repeating-linear-gradient(0deg,#e0e0e0 0 1px,#f8f8f8 1px 2px)"></div>
<div style="left:1011px;top:544px;width:1px;height:18px;background:repeating-linear-gradient(0deg,#e0e0e0 0 1px,#f8f8f8 1px 2px)"></div>
<div style="left:1193px;top:544px;width:1px;height:18px;background:repeating-linear-gradient(0deg,#e0e0e0 0 1px,#f8f8f8 1px 2px)"></div>
<div style="left:1320px;top:544px;width:1px;height:18px;background:repeating-linear-gradient(0deg,#e0e0e0 0 1px,#f8f8f8 1px 2px)"></div>
<span class="t" style="top:545.60px;letter-spacing:0.377px;left:832.80px;">Default</span>
<span class="t" style="top:545.60px;letter-spacing:0.377px;left:1014.60px;">Default</span>
<span class="t" style="top:545.60px;letter-spacing:0.377px;left:1323.70px;">Default</span>
<div style="left:1250px;top:546px;width:13px;height:13px;border:1px solid #979797;background:#fff"></div>
<div style="left:482px;top:562px;width:165px;height:20px;background:#e3e3e3"></div>
<svg class="i" style="left:467px;top:565.7px" width="13" height="13" ><use href="#ok"/></svg>
<span class="t" style="top:564.60px;letter-spacing:0.354px;left:484.40px;">Footprint Ref</span>
<span class="t" style="top:564.60px;letter-spacing:0.286px;left:650.50px;">[Footprint Ref]</span>
<div style="left:482px;top:581px;width:1020px;height:1px;background:repeating-linear-gradient(90deg,#dcdcdc 0 1px,#f3f3f3 1px 2px)"></div>
<div style="left:647px;top:563px;width:1px;height:18px;background:repeating-linear-gradient(0deg,#e0e0e0 0 1px,#f8f8f8 1px 2px)"></div>
<div style="left:829px;top:563px;width:1px;height:18px;background:repeating-linear-gradient(0deg,#e0e0e0 0 1px,#f8f8f8 1px 2px)"></div>
<div style="left:1011px;top:563px;width:1px;height:18px;background:repeating-linear-gradient(0deg,#e0e0e0 0 1px,#f8f8f8 1px 2px)"></div>
<div style="left:1193px;top:563px;width:1px;height:18px;background:repeating-linear-gradient(0deg,#e0e0e0 0 1px,#f8f8f8 1px 2px)"></div>
<div style="left:1320px;top:563px;width:1px;height:18px;background:repeating-linear-gradient(0deg,#e0e0e0 0 1px,#f8f8f8 1px 2px)"></div>
<div style="left:482px;top:600px;width:1020px;height:1px;background:repeating-linear-gradient(90deg,#dcdcdc 0 1px,#f3f3f3 1px 2px)"></div>
<div style="left:647px;top:582px;width:1px;height:18px;background:repeating-linear-gradient(0deg,#e0e0e0 0 1px,#f8f8f8 1px 2px)"></div>
<div style="left:829px;top:582px;width:1px;height:18px;background:repeating-linear-gradient(0deg,#e0e0e0 0 1px,#f8f8f8 1px 2px)"></div>
<div style="left:1011px;top:582px;width:1px;height:18px;background:repeating-linear-gradient(0deg,#e0e0e0 0 1px,#f8f8f8 1px 2px)"></div>
<div style="left:1193px;top:582px;width:1px;height:18px;background:repeating-linear-gradient(0deg,#e0e0e0 0 1px,#f8f8f8 1px 2px)"></div>
<div style="left:1320px;top:582px;width:1px;height:18px;background:repeating-linear-gradient(0deg,#e0e0e0 0 1px,#f8f8f8 1px 2px)"></div>
<span class="t" style="top:583.60px;letter-spacing:0.377px;left:832.80px;">Default</span>
<span class="t" style="top:583.60px;letter-spacing:0.377px;left:1014.60px;">Default</span>
<span class="t" style="top:583.60px;letter-spacing:0.377px;left:1323.70px;">Default</span>
<div style="left:1250px;top:584px;width:13px;height:13px;border:1px solid #979797;background:#fff"></div>
<div style="left:648px;top:600px;width:855px;height:20px;background:#e4e4e4"></div>
<div style="left:482px;top:601px;width:165px;height:18px;background:#0f55cf"></div>
<svg class="i" style="left:467px;top:603.7px" width="13" height="13" ><use href="#ok"/></svg>
<span class="t" style="top:602.60px;letter-spacing:0.501px;left:484.40px;color:#fff;">Height</span>
<span class="t" style="top:602.60px;letter-spacing:0.501px;left:650.50px;">Height</span>
<div style="left:482px;top:619px;width:1020px;height:1px;background:repeating-linear-gradient(90deg,#dcdcdc 0 1px,#f3f3f3 1px 2px)"></div>
<div style="left:647px;top:601px;width:1px;height:18px;background:repeating-linear-gradient(0deg,#e0e0e0 0 1px,#f8f8f8 1px 2px)"></div>
<div style="left:829px;top:601px;width:1px;height:18px;background:repeating-linear-gradient(0deg,#e0e0e0 0 1px,#f8f8f8 1px 2px)"></div>
<div style="left:1011px;top:601px;width:1px;height:18px;background:repeating-linear-gradient(0deg,#e0e0e0 0 1px,#f8f8f8 1px 2px)"></div>
<div style="left:1193px;top:601px;width:1px;height:18px;background:repeating-linear-gradient(0deg,#e0e0e0 0 1px,#f8f8f8 1px 2px)"></div>
<div style="left:1320px;top:601px;width:1px;height:18px;background:repeating-linear-gradient(0deg,#e0e0e0 0 1px,#f8f8f8 1px 2px)"></div>
<span class="t" style="top:602.60px;letter-spacing:0.377px;left:832.80px;">Default</span>
<span class="t" style="top:602.60px;letter-spacing:0.377px;left:1014.60px;">Default</span>
<span class="t" style="top:602.60px;letter-spacing:0.377px;left:1323.70px;">Default</span>
<div style="left:1250px;top:603px;width:13px;height:13px;border:1px solid #979797;background:#fff"></div>
<div style="left:482px;top:619px;width:165px;height:20px;background:#e3e3e3"></div>
<svg class="i" style="left:467px;top:622.7px" width="13" height="13" ><use href="#ok"/></svg>
<span class="t" style="top:621.60px;letter-spacing:-0.036px;left:484.40px;">Library Ref</span>
<span class="t" style="top:621.60px;letter-spacing:-0.056px;left:650.50px;">[Library Ref]</span>
<div style="left:482px;top:638px;width:1020px;height:1px;background:repeating-linear-gradient(90deg,#dcdcdc 0 1px,#f3f3f3 1px 2px)"></div>
<div style="left:647px;top:620px;width:1px;height:18px;background:repeating-linear-gradient(0deg,#e0e0e0 0 1px,#f8f8f8 1px 2px)"></div>
<div style="left:829px;top:620px;width:1px;height:18px;background:repeating-linear-gradient(0deg,#e0e0e0 0 1px,#f8f8f8 1px 2px)"></div>
<div style="left:1011px;top:620px;width:1px;height:18px;background:repeating-linear-gradient(0deg,#e0e0e0 0 1px,#f8f8f8 1px 2px)"></div>
<div style="left:1193px;top:620px;width:1px;height:18px;background:repeating-linear-gradient(0deg,#e0e0e0 0 1px,#f8f8f8 1px 2px)"></div>
<div style="left:1320px;top:620px;width:1px;height:18px;background:repeating-linear-gradient(0deg,#e0e0e0 0 1px,#f8f8f8 1px 2px)"></div>
<div style="left:482px;top:638px;width:165px;height:20px;background:#e3e3e3"></div>
<svg class="i" style="left:467px;top:641.7px" width="13" height="13" ><use href="#ok"/></svg>
<span class="t" style="top:640.60px;letter-spacing:0.407px;left:484.40px;">Manufacturer</span>
<span class="t" style="top:640.60px;letter-spacing:0.407px;left:650.50px;">Manufacturer</span>
<div style="left:482px;top:657px;width:1020px;height:1px;background:repeating-linear-gradient(90deg,#dcdcdc 0 1px,#f3f3f3 1px 2px)"></div>
<div style="left:647px;top:639px;width:1px;height:18px;background:repeating-linear-gradient(0deg,#e0e0e0 0 1px,#f8f8f8 1px 2px)"></div>
<div style="left:829px;top:639px;width:1px;height:18px;background:repeating-linear-gradient(0deg,#e0e0e0 0 1px,#f8f8f8 1px 2px)"></div>
<div style="left:1011px;top:639px;width:1px;height:18px;background:repeating-linear-gradient(0deg,#e0e0e0 0 1px,#f8f8f8 1px 2px)"></div>
<div style="left:1193px;top:639px;width:1px;height:18px;background:repeating-linear-gradient(0deg,#e0e0e0 0 1px,#f8f8f8 1px 2px)"></div>
<div style="left:1320px;top:639px;width:1px;height:18px;background:repeating-linear-gradient(0deg,#e0e0e0 0 1px,#f8f8f8 1px 2px)"></div>
<span class="t" style="top:640.60px;letter-spacing:0.377px;left:832.80px;">Default</span>
<span class="t" style="top:640.60px;letter-spacing:0.377px;left:1014.60px;">Default</span>
<span class="t" style="top:640.60px;letter-spacing:0.377px;left:1323.70px;">Default</span>
<div style="left:1250px;top:641px;width:13px;height:13px;border:1px solid #979797;background:#fff"></div>
<div style="left:482px;top:657px;width:165px;height:20px;background:#e3e3e3"></div>
<svg class="i" style="left:467px;top:660.7px" width="13" height="13" ><use href="#ok"/></svg>
<span class="t" style="top:659.60px;letter-spacing:0.358px;left:484.40px;">Manufacturer Number</span>
<span class="t" style="top:659.60px;letter-spacing:0.358px;left:650.50px;">Manufacturer Number</span>
<div style="left:482px;top:676px;width:1020px;height:1px;background:repeating-linear-gradient(90deg,#dcdcdc 0 1px,#f3f3f3 1px 2px)"></div>
<div style="left:647px;top:658px;width:1px;height:18px;background:repeating-linear-gradient(0deg,#e0e0e0 0 1px,#f8f8f8 1px 2px)"></div>
<div style="left:829px;top:658px;width:1px;height:18px;background:repeating-linear-gradient(0deg,#e0e0e0 0 1px,#f8f8f8 1px 2px)"></div>
<div style="left:1011px;top:658px;width:1px;height:18px;background:repeating-linear-gradient(0deg,#e0e0e0 0 1px,#f8f8f8 1px 2px)"></div>
<div style="left:1193px;top:658px;width:1px;height:18px;background:repeating-linear-gradient(0deg,#e0e0e0 0 1px,#f8f8f8 1px 2px)"></div>
<div style="left:1320px;top:658px;width:1px;height:18px;background:repeating-linear-gradient(0deg,#e0e0e0 0 1px,#f8f8f8 1px 2px)"></div>
<span class="t" style="top:659.60px;letter-spacing:0.377px;left:832.80px;">Default</span>
<span class="t" style="top:659.60px;letter-spacing:0.377px;left:1014.60px;">Default</span>
<span class="t" style="top:659.60px;letter-spacing:0.377px;left:1323.70px;">Default</span>
<div style="left:1250px;top:660px;width:13px;height:13px;border:1px solid #979797;background:#fff"></div>
<div style="left:482px;top:676px;width:165px;height:20px;background:#e3e3e3"></div>
<svg class="i" style="left:467px;top:679.7px" width="13" height="13" ><use href="#ok"/></svg>
<span class="t" style="top:678.60px;letter-spacing:0.314px;left:484.40px;">OperatingTemp</span>
<span class="t" style="top:678.60px;letter-spacing:0.314px;left:650.50px;">OperatingTemp</span>
<div style="left:482px;top:695px;width:1020px;height:1px;background:repeating-linear-gradient(90deg,#dcdcdc 0 1px,#f3f3f3 1px 2px)"></div>
<div style="left:647px;top:677px;width:1px;height:18px;background:repeating-linear-gradient(0deg,#e0e0e0 0 1px,#f8f8f8 1px 2px)"></div>
<div style="left:829px;top:677px;width:1px;height:18px;background:repeating-linear-gradient(0deg,#e0e0e0 0 1px,#f8f8f8 1px 2px)"></div>
<div style="left:1011px;top:677px;width:1px;height:18px;background:repeating-linear-gradient(0deg,#e0e0e0 0 1px,#f8f8f8 1px 2px)"></div>
<div style="left:1193px;top:677px;width:1px;height:18px;background:repeating-linear-gradient(0deg,#e0e0e0 0 1px,#f8f8f8 1px 2px)"></div>
<div style="left:1320px;top:677px;width:1px;height:18px;background:repeating-linear-gradient(0deg,#e0e0e0 0 1px,#f8f8f8 1px 2px)"></div>
<span class="t" style="top:678.60px;letter-spacing:0.377px;left:832.80px;">Default</span>
<span class="t" style="top:678.60px;letter-spacing:0.377px;left:1014.60px;">Default</span>
<span class="t" style="top:678.60px;letter-spacing:0.377px;left:1323.70px;">Default</span>
<div style="left:1250px;top:679px;width:13px;height:13px;border:1px solid #979797;background:#fff"></div>
<div style="left:482px;top:695px;width:165px;height:20px;background:#e3e3e3"></div>
<svg class="i" style="left:467px;top:698.7px" width="13" height="13" ><use href="#ok"/></svg>
<span class="t" style="top:697.60px;letter-spacing:-1.144px;left:484.40px;">P</span>
<span class="t" style="top:697.60px;letter-spacing:-1.144px;left:650.50px;">P</span>
<div style="left:482px;top:714px;width:1020px;height:1px;background:repeating-linear-gradient(90deg,#dcdcdc 0 1px,#f3f3f3 1px 2px)"></div>
<div style="left:647px;top:696px;width:1px;height:18px;background:repeating-linear-gradient(0deg,#e0e0e0 0 1px,#f8f8f8 1px 2px)"></div>
<div style="left:829px;top:696px;width:1px;height:18px;background:repeating-linear-gradient(0deg,#e0e0e0 0 1px,#f8f8f8 1px 2px)"></div>
<div style="left:1011px;top:696px;width:1px;height:18px;background:repeating-linear-gradient(0deg,#e0e0e0 0 1px,#f8f8f8 1px 2px)"></div>
<div style="left:1193px;top:696px;width:1px;height:18px;background:repeating-linear-gradient(0deg,#e0e0e0 0 1px,#f8f8f8 1px 2px)"></div>
<div style="left:1320px;top:696px;width:1px;height:18px;background:repeating-linear-gradient(0deg,#e0e0e0 0 1px,#f8f8f8 1px 2px)"></div>
<span class="t" style="top:697.60px;letter-spacing:0.377px;left:832.80px;">Default</span>
<span class="t" style="top:697.60px;letter-spacing:0.377px;left:1014.60px;">Default</span>
<span class="t" style="top:697.60px;letter-spacing:0.377px;left:1323.70px;">Default</span>
<div style="left:1250px;top:698px;width:13px;height:13px;border:1px solid #979797;background:#fff"></div>
<div style="left:482px;top:714px;width:165px;height:20px;background:#e3e3e3"></div>
<svg class="i" style="left:467px;top:717.7px" width="13" height="13" ><use href="#ok"/></svg>
<span class="t" style="top:716.60px;letter-spacing:0.131px;left:484.40px;">Part Number</span>
<span class="t" style="top:716.60px;letter-spacing:0.131px;left:650.50px;color:#8a8a8a;">Part Number</span>
<div style="left:482px;top:733px;width:1020px;height:1px;background:repeating-linear-gradient(90deg,#dcdcdc 0 1px,#f3f3f3 1px 2px)"></div>
<div style="left:647px;top:715px;width:1px;height:18px;background:repeating-linear-gradient(0deg,#e0e0e0 0 1px,#f8f8f8 1px 2px)"></div>
<div style="left:829px;top:715px;width:1px;height:18px;background:repeating-linear-gradient(0deg,#e0e0e0 0 1px,#f8f8f8 1px 2px)"></div>
<div style="left:1011px;top:715px;width:1px;height:18px;background:repeating-linear-gradient(0deg,#e0e0e0 0 1px,#f8f8f8 1px 2px)"></div>
<div style="left:1193px;top:715px;width:1px;height:18px;background:repeating-linear-gradient(0deg,#e0e0e0 0 1px,#f8f8f8 1px 2px)"></div>
<div style="left:1320px;top:715px;width:1px;height:18px;background:repeating-linear-gradient(0deg,#e0e0e0 0 1px,#f8f8f8 1px 2px)"></div>
<div style="left:482px;top:733px;width:165px;height:20px;background:#e3e3e3"></div>
<svg class="i" style="left:467px;top:736.7px" width="13" height="13" ><use href="#ok"/></svg>
<span class="t" style="top:735.60px;letter-spacing:0.271px;left:484.40px;">Publisher</span>
<span class="t" style="top:735.60px;letter-spacing:0.271px;left:650.50px;">Publisher</span>
<div style="left:482px;top:752px;width:1020px;height:1px;background:repeating-linear-gradient(90deg,#dcdcdc 0 1px,#f3f3f3 1px 2px)"></div>
<div style="left:647px;top:734px;width:1px;height:18px;background:repeating-linear-gradient(0deg,#e0e0e0 0 1px,#f8f8f8 1px 2px)"></div>
<div style="left:829px;top:734px;width:1px;height:18px;background:repeating-linear-gradient(0deg,#e0e0e0 0 1px,#f8f8f8 1px 2px)"></div>
<div style="left:1011px;top:734px;width:1px;height:18px;background:repeating-linear-gradient(0deg,#e0e0e0 0 1px,#f8f8f8 1px 2px)"></div>
<div style="left:1193px;top:734px;width:1px;height:18px;background:repeating-linear-gradient(0deg,#e0e0e0 0 1px,#f8f8f8 1px 2px)"></div>
<div style="left:1320px;top:734px;width:1px;height:18px;background:repeating-linear-gradient(0deg,#e0e0e0 0 1px,#f8f8f8 1px 2px)"></div>
<span class="t" style="top:735.60px;letter-spacing:0.377px;left:832.80px;">Default</span>
<span class="t" style="top:735.60px;letter-spacing:0.377px;left:1014.60px;">Default</span>
<span class="t" style="top:735.60px;letter-spacing:0.377px;left:1323.70px;">Default</span>
<div style="left:1250px;top:736px;width:13px;height:13px;border:1px solid #979797;background:#fff"></div>
<div style="left:482px;top:752px;width:165px;height:20px;background:#e3e3e3"></div>
<svg class="i" style="left:467px;top:755.7px" width="13" height="13" ><use href="#ok"/></svg>
<span class="t" style="top:754.60px;letter-spacing:0.329px;left:484.40px;">PublishingDate</span>
<span class="t" style="top:754.60px;letter-spacing:0.329px;left:650.50px;">PublishingDate</span>
<div style="left:482px;top:771px;width:1020px;height:1px;background:repeating-linear-gradient(90deg,#dcdcdc 0 1px,#f3f3f3 1px 2px)"></div>
<div style="left:647px;top:753px;width:1px;height:18px;background:repeating-linear-gradient(0deg,#e0e0e0 0 1px,#f8f8f8 1px 2px)"></div>
<div style="left:829px;top:753px;width:1px;height:18px;background:repeating-linear-gradient(0deg,#e0e0e0 0 1px,#f8f8f8 1px 2px)"></div>
<div style="left:1011px;top:753px;width:1px;height:18px;background:repeating-linear-gradient(0deg,#e0e0e0 0 1px,#f8f8f8 1px 2px)"></div>
<div style="left:1193px;top:753px;width:1px;height:18px;background:repeating-linear-gradient(0deg,#e0e0e0 0 1px,#f8f8f8 1px 2px)"></div>
<div style="left:1320px;top:753px;width:1px;height:18px;background:repeating-linear-gradient(0deg,#e0e0e0 0 1px,#f8f8f8 1px 2px)"></div>
<span class="t" style="top:754.60px;letter-spacing:0.377px;left:832.80px;">Default</span>
<span class="t" style="top:754.60px;letter-spacing:0.377px;left:1014.60px;">Default</span>
<span class="t" style="top:754.60px;letter-spacing:0.377px;left:1323.70px;">Default</span>
<div style="left:1250px;top:755px;width:13px;height:13px;border:1px solid #979797;background:#fff"></div>
<div style="left:482px;top:771px;width:165px;height:20px;background:#e3e3e3"></div>
<svg class="i" style="left:467px;top:774.7px" width="13" height="13" ><use href="#ok"/></svg>
<span class="t" style="top:773.60px;letter-spacing:-0.063px;left:484.40px;">RS Number</span>
<span class="t" style="top:773.60px;letter-spacing:-0.063px;left:650.50px;">RS Number</span>
<div style="left:482px;top:790px;width:1020px;height:1px;background:repeating-linear-gradient(90deg,#dcdcdc 0 1px,#f3f3f3 1px 2px)"></div>
<div style="left:647px;top:772px;width:1px;height:18px;background:repeating-linear-gradient(0deg,#e0e0e0 0 1px,#f8f8f8 1px 2px)"></div>
<div style="left:829px;top:772px;width:1px;height:18px;background:repeating-linear-gradient(0deg,#e0e0e0 0 1px,#f8f8f8 1px 2px)"></div>
<div style="left:1011px;top:772px;width:1px;height:18px;background:repeating-linear-gradient(0deg,#e0e0e0 0 1px,#f8f8f8 1px 2px)"></div>
<div style="left:1193px;top:772px;width:1px;height:18px;background:repeating-linear-gradient(0deg,#e0e0e0 0 1px,#f8f8f8 1px 2px)"></div>
<div style="left:1320px;top:772px;width:1px;height:18px;background:repeating-linear-gradient(0deg,#e0e0e0 0 1px,#f8f8f8 1px 2px)"></div>
<span class="t" style="top:773.60px;letter-spacing:0.377px;left:832.80px;">Default</span>
<span class="t" style="top:773.60px;letter-spacing:0.377px;left:1014.60px;">Default</span>
<span class="t" style="top:773.60px;letter-spacing:0.377px;left:1323.70px;">Default</span>
<div style="left:1250px;top:774px;width:13px;height:13px;border:1px solid #979797;background:#fff"></div>
<div style="left:482px;top:790px;width:165px;height:20px;background:#e3e3e3"></div>
<svg class="i" style="left:467px;top:793.7px" width="13" height="13" ><use href="#ok"/></svg>
<span class="t" style="top:792.60px;letter-spacing:-0.105px;left:484.40px;">Sim Excluded Parts</span>
<span class="t" style="top:792.60px;letter-spacing:-0.110px;left:650.50px;">[Sim Excluded Parts]</span>
<div style="left:482px;top:809px;width:1020px;height:1px;background:repeating-linear-gradient(90deg,#dcdcdc 0 1px,#f3f3f3 1px 2px)"></div>
<div style="left:647px;top:791px;width:1px;height:18px;background:repeating-linear-gradient(0deg,#e0e0e0 0 1px,#f8f8f8 1px 2px)"></div>
<div style="left:829px;top:791px;width:1px;height:18px;background:repeating-linear-gradient(0deg,#e0e0e0 0 1px,#f8f8f8 1px 2px)"></div>
<div style="left:1011px;top:791px;width:1px;height:18px;background:repeating-linear-gradient(0deg,#e0e0e0 0 1px,#f8f8f8 1px 2px)"></div>
<div style="left:1193px;top:791px;width:1px;height:18px;background:repeating-linear-gradient(0deg,#e0e0e0 0 1px,#f8f8f8 1px 2px)"></div>
<div style="left:1320px;top:791px;width:1px;height:18px;background:repeating-linear-gradient(0deg,#e0e0e0 0 1px,#f8f8f8 1px 2px)"></div>
<div style="left:482px;top:809px;width:165px;height:20px;background:#e3e3e3"></div>
<svg class="i" style="left:467px;top:812.7px" width="13" height="13" ><use href="#ok"/></svg>
<span class="t" style="top:811.60px;letter-spacing:-0.142px;left:484.40px;">Sim File</span>
<span class="t" style="top:811.60px;letter-spacing:-0.144px;left:650.50px;">[Sim File]</span>
<div style="left:482px;top:828px;width:1020px;height:1px;background:repeating-linear-gradient(90deg,#dcdcdc 0 1px,#f3f3f3 1px 2px)"></div>
<div style="left:647px;top:810px;width:1px;height:18px;background:repeating-linear-gradient(0deg,#e0e0e0 0 1px,#f8f8f8 1px 2px)"></div>
<div style="left:829px;top:810px;width:1px;height:18px;background:repeating-linear-gradient(0deg,#e0e0e0 0 1px,#f8f8f8 1px 2px)"></div>
<div style="left:1011px;top:810px;width:1px;height:18px;background:repeating-linear-gradient(0deg,#e0e0e0 0 1px,#f8f8f8 1px 2px)"></div>
<div style="left:1193px;top:810px;width:1px;height:18px;background:repeating-linear-gradient(0deg,#e0e0e0 0 1px,#f8f8f8 1px 2px)"></div>
<div style="left:1320px;top:810px;width:1px;height:18px;background:repeating-linear-gradient(0deg,#e0e0e0 0 1px,#f8f8f8 1px 2px)"></div>
<div style="left:482px;top:828px;width:165px;height:20px;background:#e3e3e3"></div>
<svg class="i" style="left:467px;top:831.7px" width="13" height="13" ><use href="#ok"/></svg>
<span class="t" style="top:830.60px;letter-spacing:-0.079px;left:484.40px;">Sim Kind</span>
<span class="t" style="top:830.60px;letter-spacing:-0.094px;left:650.50px;">[Sim Kind]</span>
<div style="left:482px;top:847px;width:1020px;height:1px;background:repeating-linear-gradient(90deg,#dcdcdc 0 1px,#f3f3f3 1px 2px)"></div>
<div style="left:647px;top:829px;width:1px;height:18px;background:repeating-linear-gradient(0deg,#e0e0e0 0 1px,#f8f8f8 1px 2px)"></div>
<div style="left:829px;top:829px;width:1px;height:18px;background:repeating-linear-gradient(0deg,#e0e0e0 0 1px,#f8f8f8 1px 2px)"></div>
<div style="left:1011px;top:829px;width:1px;height:18px;background:repeating-linear-gradient(0deg,#e0e0e0 0 1px,#f8f8f8 1px 2px)"></div>
<div style="left:1193px;top:829px;width:1px;height:18px;background:repeating-linear-gradient(0deg,#e0e0e0 0 1px,#f8f8f8 1px 2px)"></div>
<div style="left:1320px;top:829px;width:1px;height:18px;background:repeating-linear-gradient(0deg,#e0e0e0 0 1px,#f8f8f8 1px 2px)"></div>
<div style="left:482px;top:847px;width:165px;height:20px;background:#e3e3e3"></div>
<svg class="i" style="left:467px;top:850.7px" width="13" height="13" ><use href="#ok"/></svg>
<span class="t" style="top:849.60px;letter-spacing:0.081px;left:484.40px;">Sim Model Name</span>
<span class="t" style="top:849.60px;letter-spacing:0.051px;left:650.50px;">[Sim Model Name]</span>
<div style="left:482px;top:866px;width:1020px;height:1px;background:repeating-linear-gradient(90deg,#dcdcdc 0 1px,#f3f3f3 1px 2px)"></div>
<div style="left:647px;top:848px;width:1px;height:18px;background:repeating-linear-gradient(0deg,#e0e0e0 0 1px,#f8f8f8 1px 2px)"></div>
<div style="left:829px;top:848px;width:1px;height:18px;background:repeating-linear-gradient(0deg,#e0e0e0 0 1px,#f8f8f8 1px 2px)"></div>
<div style="left:1011px;top:848px;width:1px;height:18px;background:repeating-linear-gradient(0deg,#e0e0e0 0 1px,#f8f8f8 1px 2px)"></div>
<div style="left:1193px;top:848px;width:1px;height:18px;background:repeating-linear-gradient(0deg,#e0e0e0 0 1px,#f8f8f8 1px 2px)"></div>
<div style="left:1320px;top:848px;width:1px;height:18px;background:repeating-linear-gradient(0deg,#e0e0e0 0 1px,#f8f8f8 1px 2px)"></div>
<div style="left:482px;top:866px;width:165px;height:20px;background:#e3e3e3"></div>
<svg class="i" style="left:467px;top:869.7px" width="13" height="13" ><use href="#ok"/></svg>
<span class="t" style="top:868.60px;letter-spacing:0.112px;left:484.40px;">Sim Netlist</span>
<span class="t" style="top:868.60px;letter-spacing:0.070px;left:650.50px;">[Sim Netlist]</span>
<div style="left:482px;top:885px;width:1020px;height:1px;background:repeating-linear-gradient(90deg,#dcdcdc 0 1px,#f3f3f3 1px 2px)"></div>
<div style="left:647px;top:867px;width:1px;height:18px;background:repeating-linear-gradient(0deg,#e0e0e0 0 1px,#f8f8f8 1px 2px)"></div>
<div style="left:829px;top:867px;width:1px;height:18px;background:repeating-linear-gradient(0deg,#e0e0e0 0 1px,#f8f8f8 1px 2px)"></div>
<div style="left:1011px;top:867px;width:1px;height:18px;background:repeating-linear-gradient(0deg,#e0e0e0 0 1px,#f8f8f8 1px 2px)"></div>
<div style="left:1193px;top:867px;width:1px;height:18px;background:repeating-linear-gradient(0deg,#e0e0e0 0 1px,#f8f8f8 1px 2px)"></div>
<div style="left:1320px;top:867px;width:1px;height:18px;background:repeating-linear-gradient(0deg,#e0e0e0 0 1px,#f8f8f8 1px 2px)"></div>
<div style="left:482px;top:885px;width:165px;height:20px;background:#e3e3e3"></div>
<svg class="i" style="left:467px;top:888.7px" width="13" height="13" ><use href="#ok"/></svg>
<span class="t" style="top:887.60px;letter-spacing:-0.169px;left:484.40px;">Sim Parameters</span>
<span class="t" style="top:887.60px;letter-spacing:-0.167px;left:650.50px;">[Sim Parameters]</span>
<div style="left:482px;top:904px;width:1020px;height:1px;background:repeating-linear-gradient(90deg,#dcdcdc 0 1px,#f3f3f3 1px 2px)"></div>
<div style="left:647px;top:886px;width:1px;height:18px;background:repeating-linear-gradient(0deg,#e0e0e0 0 1px,#f8f8f8 1px 2px)"></div>
<div style="left:829px;top:886px;width:1px;height:18px;background:repeating-linear-gradient(0deg,#e0e0e0 0 1px,#f8f8f8 1px 2px)"></div>
<div style="left:1011px;top:886px;width:1px;height:18px;background:repeating-linear-gradient(0deg,#e0e0e0 0 1px,#f8f8f8 1px 2px)"></div>
<div style="left:1193px;top:886px;width:1px;height:18px;background:repeating-linear-gradient(0deg,#e0e0e0 0 1px,#f8f8f8 1px 2px)"></div>
<div style="left:1320px;top:886px;width:1px;height:18px;background:repeating-linear-gradient(0deg,#e0e0e0 0 1px,#f8f8f8 1px 2px)"></div>
<div style="left:482px;top:904px;width:165px;height:20px;background:#e3e3e3"></div>
<svg class="i" style="left:467px;top:907.7px" width="13" height="13" ><use href="#ok"/></svg>
<span class="t" style="top:906.60px;letter-spacing:0.047px;left:484.40px;">Sim Port Map</span>
<span class="t" style="top:906.60px;letter-spacing:0.018px;left:650.50px;">[Sim Port Map]</span>
<div style="left:482px;top:923px;width:1020px;height:1px;background:repeating-linear-gradient(90deg,#dcdcdc 0 1px,#f3f3f3 1px 2px)"></div>
<div style="left:647px;top:905px;width:1px;height:18px;background:repeating-linear-gradient(0deg,#e0e0e0 0 1px,#f8f8f8 1px 2px)"></div>
<div style="left:829px;top:905px;width:1px;height:18px;background:repeating-linear-gradient(0deg,#e0e0e0 0 1px,#f8f8f8 1px 2px)"></div>
<div style="left:1011px;top:905px;width:1px;height:18px;background:repeating-linear-gradient(0deg,#e0e0e0 0 1px,#f8f8f8 1px 2px)"></div>
<div style="left:1193px;top:905px;width:1px;height:18px;background:repeating-linear-gradient(0deg,#e0e0e0 0 1px,#f8f8f8 1px 2px)"></div>
<div style="left:1320px;top:905px;width:1px;height:18px;background:repeating-linear-gradient(0deg,#e0e0e0 0 1px,#f8f8f8 1px 2px)"></div>
<div style="left:482px;top:923px;width:165px;height:20px;background:#e3e3e3"></div>
<svg class="i" style="left:467px;top:926.7px" width="13" height="13" ><use href="#ok"/></svg>
<span class="t" style="top:925.60px;letter-spacing:-0.106px;left:484.40px;">Sim Spice Prefix</span>
<span class="t" style="top:925.60px;letter-spacing:-0.112px;left:650.50px;">[Sim Spice Prefix]</span>
<div style="left:482px;top:942px;width:1020px;height:1px;background:repeating-linear-gradient(90deg,#dcdcdc 0 1px,#f3f3f3 1px 2px)"></div>
<div style="left:647px;top:924px;width:1px;height:18px;background:repeating-linear-gradient(0deg,#e0e0e0 0 1px,#f8f8f8 1px 2px)"></div>
<div style="left:829px;top:924px;width:1px;height:18px;background:repeating-linear-gradient(0deg,#e0e0e0 0 1px,#f8f8f8 1px 2px)"></div>
<div style="left:1011px;top:924px;width:1px;height:18px;background:repeating-linear-gradient(0deg,#e0e0e0 0 1px,#f8f8f8 1px 2px)"></div>
<div style="left:1193px;top:924px;width:1px;height:18px;background:repeating-linear-gradient(0deg,#e0e0e0 0 1px,#f8f8f8 1px 2px)"></div>
<div style="left:1320px;top:924px;width:1px;height:18px;background:repeating-linear-gradient(0deg,#e0e0e0 0 1px,#f8f8f8 1px 2px)"></div>
<div style="left:482px;top:942px;width:165px;height:20px;background:#e3e3e3"></div>
<svg class="i" style="left:467px;top:945.7px" width="13" height="13" ><use href="#ok"/></svg>
<span class="t" style="top:944.60px;letter-spacing:-0.018px;left:484.40px;">Sim SubKind</span>
<span class="t" style="top:944.60px;letter-spacing:-0.039px;left:650.50px;">[Sim SubKind]</span>
<div style="left:482px;top:961px;width:1020px;height:1px;background:repeating-linear-gradient(90deg,#dcdcdc 0 1px,#f3f3f3 1px 2px)"></div>
<div style="left:647px;top:943px;width:1px;height:18px;background:repeating-linear-gradient(0deg,#e0e0e0 0 1px,#f8f8f8 1px 2px)"></div>
<div style="left:829px;top:943px;width:1px;height:18px;background:repeating-linear-gradient(0deg,#e0e0e0 0 1px,#f8f8f8 1px 2px)"></div>
<div style="left:1011px;top:943px;width:1px;height:18px;background:repeating-linear-gradient(0deg,#e0e0e0 0 1px,#f8f8f8 1px 2px)"></div>
<div style="left:1193px;top:943px;width:1px;height:18px;background:repeating-linear-gradient(0deg,#e0e0e0 0 1px,#f8f8f8 1px 2px)"></div>
<div style="left:1320px;top:943px;width:1px;height:18px;background:repeating-linear-gradient(0deg,#e0e0e0 0 1px,#f8f8f8 1px 2px)"></div>
<div style="left:482px;top:961px;width:165px;height:20px;background:#e3e3e3"></div>
<svg class="i" style="left:467px;top:964.7px" width="13" height="13" ><use href="#ok"/></svg>
<span class="t" style="top:963.60px;letter-spacing:0.066px;left:484.40px;">Tolerance</span>
<span class="t" style="top:963.60px;letter-spacing:0.066px;left:650.50px;">Tolerance</span>
<div style="left:482px;top:980px;width:1020px;height:1px;background:repeating-linear-gradient(90deg,#dcdcdc 0 1px,#f3f3f3 1px 2px)"></div>
<div style="left:647px;top:962px;width:1px;height:18px;background:repeating-linear-gradient(0deg,#e0e0e0 0 1px,#f8f8f8 1px 2px)"></div>
<div style="left:829px;top:962px;width:1px;height:18px;background:repeating-linear-gradient(0deg,#e0e0e0 0 1px,#f8f8f8 1px 2px)"></div>
<div style="left:1011px;top:962px;width:1px;height:18px;background:repeating-linear-gradient(0deg,#e0e0e0 0 1px,#f8f8f8 1px 2px)"></div>
<div style="left:1193px;top:962px;width:1px;height:18px;background:repeating-linear-gradient(0deg,#e0e0e0 0 1px,#f8f8f8 1px 2px)"></div>
<div style="left:1320px;top:962px;width:1px;height:18px;background:repeating-linear-gradient(0deg,#e0e0e0 0 1px,#f8f8f8 1px 2px)"></div>
<span class="t" style="top:963.60px;letter-spacing:0.377px;left:832.80px;">Default</span>
<span class="t" style="top:963.60px;letter-spacing:0.377px;left:1014.60px;">Default</span>
<span class="t" style="top:963.60px;letter-spacing:0.377px;left:1323.70px;">Default</span>
<div style="left:1250px;top:964px;width:13px;height:13px;border:1px solid #979797;background:#fff"></div>
<svg class="i" style="left:0;top:0" width="1567" height="10"><path d="M1522.6 6.2L1527.4 .8L1532.2 6.2H1529.6L1527.4 3.6L1525.2 6.2Z" fill="#000"/></svg>
<div style="left:1545px;top:-3px;width:20px;height:25px;border:1px solid #cfcfcf;background:#f3f3f3"></div>
<div style="left:1545px;top:23.5px;width:20px;height:50px;border:1px solid #cfcfcf;background:#f3f3f3"></div>
<span class="t" style="left:1562.2px;top:27.3px;color:#36404f;transform-origin:0 0;transform:rotate(90deg);letter-spacing:-0.265px">Libraries</span>
<span class="t" style="left:1562.2px;top:-29.51px;color:#36404f;transform-origin:0 0;transform:rotate(90deg);letter-spacing:-0.265px">Clipboard</span>
</body></html>
